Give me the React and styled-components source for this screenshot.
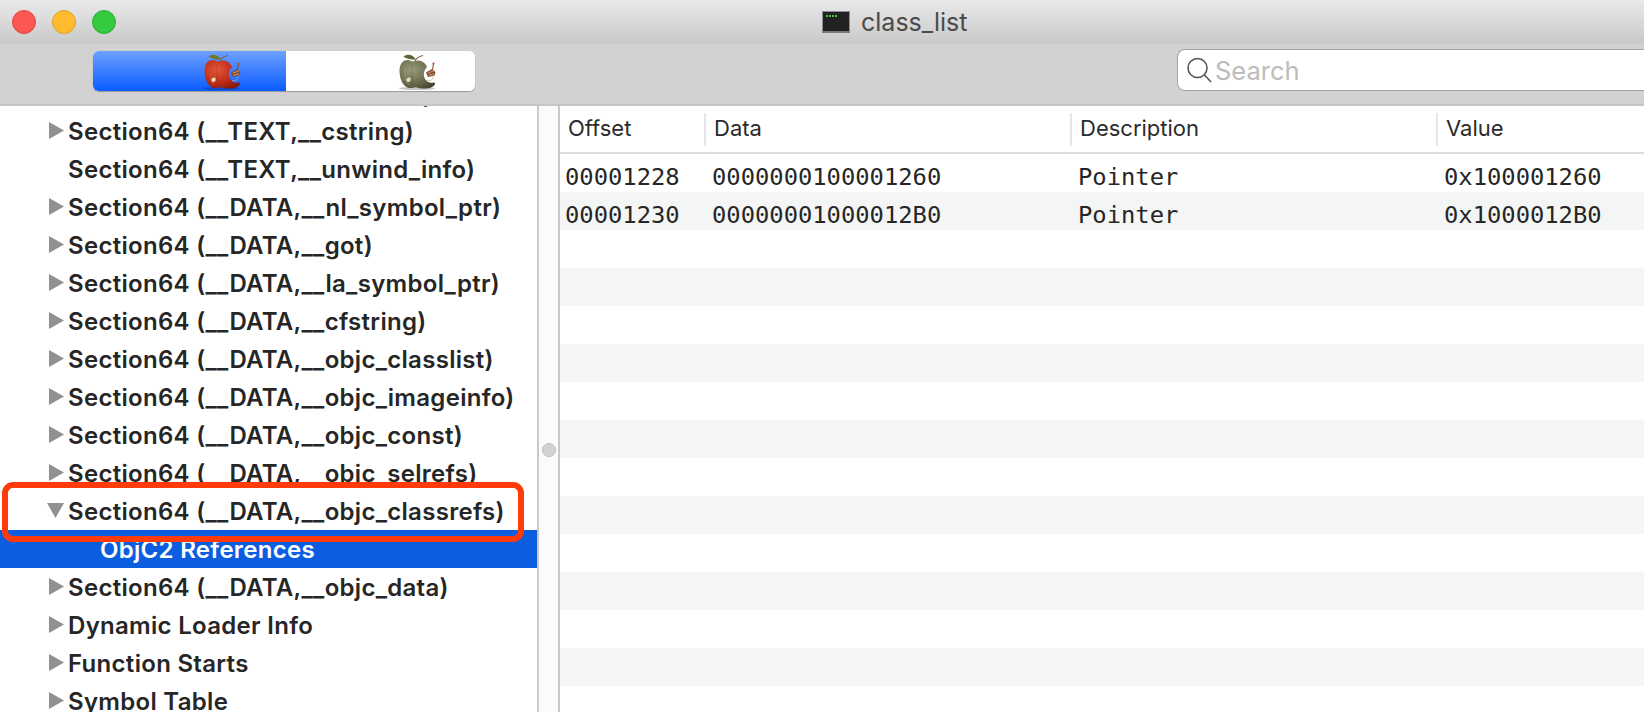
import React from 'react';
import styled, { createGlobalStyle } from 'styled-components';

const GlobalStyle = createGlobalStyle`
  html, body {
    margin: 0;
    padding: 0;
    background: #fff;
    overflow: hidden;
  }
`;

const Window = styled.div`
  position: relative;
  width: 1644px;
  height: 712px;
  overflow: hidden;
  display: flex;
  flex-direction: column;
  font-family: Inter, "Liberation Sans", sans-serif;
  color: #262626;
`;

const TitleBar = styled.div`
  position: relative;
  height: 44px;
  flex: none;
  display: flex;
  align-items: center;
  background: linear-gradient(#e9e9e9, #c9c9c9);
`;

const Lights = styled.div`
  display: flex;
  gap: 16px;
  padding-left: 12px;
`;

const Light = styled.span`
  width: 24px;
  height: 24px;
  box-sizing: border-box;
  border-radius: 50%;
  background: ${p => p.$fill};
  border: 1px solid ${p => p.$edge};
`;

const Title = styled.div`
  display: flex;
  align-items: center;
  gap: 11px;
  margin-left: 706px;
  font-size: 25px;
  color: #4b4b4b;
`;

const TermIcon = styled.span`
  width: 28px;
  height: 22px;
  box-sizing: border-box;
  background: #222;
  border: 1px solid #8b8f8f;
  border-bottom: 2px solid #777;
  display: flex;
  padding: 3px 3px;
  gap: 1px;
  i {
    width: 2px;
    height: 2px;
    background: #4fc04f;
  }
`;

const Toolbar = styled.div`
  height: 62px;
  flex: none;
  box-sizing: border-box;
  background: #d2d2d2;
  border-bottom: 2px solid #c6c6c6;
  display: flex;
  align-items: flex-start;
  padding: 7px 0 0 93px;
`;

const Segmented = styled.div`
  width: 382px;
  height: 40px;
  flex: none;
  display: flex;
  border-radius: 6px;
  overflow: hidden;
  background: #fff;
  box-shadow: 0 1px 1px #9a9a9a, 0 0 1px #a8a8a8;
`;

const Segment = styled.div`
  height: 40px;
  flex: none;
  width: ${p => p.$width}px;
  padding-left: ${p => p.$inset}px;
  box-sizing: border-box;
  background: ${p => (p.$active ? 'linear-gradient(#6ea1ff, #0a5bff)' : '#fff')};
`;

const SearchBox = styled.div`
  width: 480px;
  height: 42px;
  margin: -2px 0 0 702px;
  box-sizing: border-box;
  flex: none;
  display: flex;
  align-items: center;
  gap: 3px;
  padding-left: 8px;
  background: #fff;
  border: 1px solid #a3a3a3;
  border-right: 0;
  border-radius: 8px 0 0 8px;
  font-size: 25.5px;
  color: #bcbcbc;
`;

const Body = styled.div`
  flex: 1;
  min-height: 0;
  display: flex;
`;

const Sidebar = styled.div`
  width: 537px;
  flex: none;
  overflow: hidden;
  background: #fff;
`;

const TreeList = styled.div`
  margin-top: -32px;
`;

const TreeRow = styled.div`
  height: 38px;
  display: flex;
  align-items: center;
  padding-left: ${p => p.$indent}px;
  font-size: 24px;
  font-weight: 600;
  letter-spacing: 0.3px;
  white-space: nowrap;
  background: ${p => (p.$selected ? '#0b5ee0' : 'transparent')};
  color: ${p => (p.$selected ? '#fff' : '#262626')};
`;

const Disclosure = styled.svg`
  width: 21px;
  height: 18px;
  flex: none;
  fill: #919191;
`;

const Splitter = styled.div`
  width: 19px;
  flex: none;
  box-sizing: content-box;
  border-left: 2px solid #c9c9c9;
  border-right: 2px solid #c9c9c9;
  background: #fbfbfb;
  display: flex;
  justify-content: center;
  padding-top: 337px;
`;

const Grip = styled.span`
  width: 12px;
  height: 12px;
  border-radius: 50%;
  background: #d2d2d2;
  border: 1px solid #bdbdbd;
`;

const Table = styled.div`
  flex: 1;
  min-width: 0;
  overflow: hidden;
  background: #fff;
`;

const columns = '144px 366px 366px 1fr';

const HeaderRow = styled.div`
  display: grid;
  grid-template-columns: ${columns};
  height: 48px;
  box-sizing: border-box;
  border-bottom: 2px solid #dcdcdc;
  padding-top: 7px;
`;

const HeaderCell = styled.div`
  height: 33px;
  line-height: 31px;
  padding-left: 8px;
  font-size: 22px;
  color: #2b2b2b;
  border-left: ${p => (p.$first ? '0' : '2px solid #e6e6e6')};
`;

const DataRow = styled.div`
  display: grid;
  grid-template-columns: ${columns};
  height: 38px;
  line-height: 47px;
  align-items: center;
  background: ${p => (p.$striped ? '#f4f5f5' : '#fff')};
  font-family: "DejaVu Sans Mono", "Liberation Mono", monospace;
  font-size: 23.8px;
  color: #262626;
`;

const DataCell = styled.div`
  height: 38px;
  padding-left: ${p => (p.$first ? 5 : 8)}px;
  white-space: nowrap;
`;

const Annotation = styled.div`
  position: absolute;
  left: 2px;
  top: 482px;
  width: 522px;
  height: 60px;
  box-sizing: border-box;
  border: 6px solid #ff3b0c;
  border-radius: 11px;
  pointer-events: none;
`;

const palettes = {
  red: { light: '#e2583a', mid: '#bf2d18', dark: '#7f1608', leaf: '#6d7a2a' },
  olive: { light: '#9a9c7c', mid: '#6d6f50', dark: '#3f412c', leaf: '#5f6638' },
};

// hand drawn bitten apple with a little worm poking out
function Apple({ tone }) {
  const c = palettes[tone];
  const id = `apple-${tone}`;
  return (
    <svg width="50" height="40" viewBox="0 3 50 40">
      <defs>
        <radialGradient id={id} cx="0.35" cy="0.35" r="0.8">
          <stop offset="0" stopColor={c.light} />
          <stop offset="0.55" stopColor={c.mid} />
          <stop offset="1" stopColor={c.dark} />
        </radialGradient>
      </defs>
      <ellipse cx="27" cy="40.5" rx="18" ry="1.6" fill="#000" opacity="0.22" />
      <path
        d="M20 12.5 C14 10.5 9.5 15 9.5 23 C9.5 32 14 40 20 40 C23 40 24 39 26 39.2 C30 41 38 41 42 39 C45 37.5 46 35 44 34.5 C40 35.5 36 34 34.5 30 C33 26 34 22 37 19 C36 15 30 11 25.5 13 C23.5 14 22 13.2 20 12.5 Z"
        fill={`url(#${id})`}
      />
      <path d="M13.5 8.5 C17 5.5 23 6 26 11.5 C21 11.5 16 11 13.5 8.5 Z" fill={c.leaf} />
      <path d="M25 13.5 C26 10.5 28 8.5 33 7.5" fill="none" stroke="#7d6238" strokeWidth="1.2" />
      <path d="M15 20 C15.5 28 15 33 19 37" fill="none" stroke={c.light} strokeWidth="1.2" opacity="0.5" />
      <path d="M22 17 C21 24 22 30 24 37" fill="none" stroke={c.dark} strokeWidth="0.8" opacity="0.35" />
      <path d="M16.5 31 C17.5 29.5 19.5 29 20.5 30 C21 32.5 20 34 18.5 34 C17 34 16 33 16.5 31 Z" fill="#e6dcc0" />
      <path d="M36 24.5 L42 21 L45.5 24 L44.5 27.5 L38 29 Z" fill="#8a4a2c" />
      <path d="M38 25 L44 22.8 M38.5 27.2 L44 25.8" stroke="#d9c4a6" strokeWidth="0.7" />
      <path d="M42.5 21.5 L43.5 16" stroke="#8a4a2c" strokeWidth="1.1" />
      <circle cx="43.5" cy="15.5" r="1.1" fill="#a8552c" />
      <path d="M37 32.5 C40 33.5 43 32 43 28.5" fill="none" stroke="#c9a98a" strokeWidth="0.8" />
    </svg>
  );
}

function SearchIcon() {
  return (
    <svg width="26" height="30" viewBox="0 0 26 30" fill="none" stroke="#555" strokeWidth="1.6">
      <circle cx="11.5" cy="13" r="9.5" />
      <path d="M18.5 20 L25 27" />
    </svg>
  );
}

function Triangle({ open }) {
  return (
    <Disclosure viewBox="0 0 21 18">
      {open ? <polygon points="0,1 17,1 8.5,16" /> : <polygon points="2,0 17,8.5 2,17" />}
    </Disclosure>
  );
}

const tree = [
  { label: 'Section64 (__TEXT,__stub_helper)', arrow: true },
  { label: 'Section64 (__TEXT,__cstring)', arrow: true },
  { label: 'Section64 (__TEXT,__unwind_info)' },
  { label: 'Section64 (__DATA,__nl_symbol_ptr)', arrow: true },
  { label: 'Section64 (__DATA,__got)', arrow: true },
  { label: 'Section64 (__DATA,__la_symbol_ptr)', arrow: true },
  { label: 'Section64 (__DATA,__cfstring)', arrow: true },
  { label: 'Section64 (__DATA,__objc_classlist)', arrow: true },
  { label: 'Section64 (__DATA,__objc_imageinfo)', arrow: true },
  { label: 'Section64 (__DATA,__objc_const)', arrow: true },
  { label: 'Section64 (__DATA,__objc_selrefs)', arrow: true },
  { label: 'Section64 (__DATA,__objc_classrefs)', open: true },
  { label: 'ObjC2 References', child: true },
  { label: 'Section64 (__DATA,__objc_data)', arrow: true },
  { label: 'Dynamic Loader Info', arrow: true },
  { label: 'Function Starts', arrow: true },
  { label: 'Symbol Table', arrow: true },
];

const rows = [
  ['00001228', '0000000100001260', 'Pointer', '0x100001260'],
  ['00001230', '00000001000012B0', 'Pointer', '0x1000012B0'],
  ...Array.from({ length: 13 }, () => ['', '', '', '']),
];

export default function App() {
  return (
    <>
      <GlobalStyle />
      <Window>
        <TitleBar>
          <Lights>
            <Light $fill="#fd5754" $edge="#e0443e" />
            <Light $fill="#febb2e" $edge="#dea123" />
            <Light $fill="#34c93f" $edge="#2aac32" />
          </Lights>
          <Title>
            <TermIcon>
              <i /><i /><i /><i />
            </TermIcon>
            class_list
          </Title>
        </TitleBar>
        <Toolbar>
          <Segmented>
            <Segment $active $width={193} $inset={102}>
              <Apple tone="red" />
            </Segment>
            <Segment $width={189} $inset={104}>
              <Apple tone="olive" />
            </Segment>
          </Segmented>
          <SearchBox>
            <SearchIcon />
            Search
          </SearchBox>
        </Toolbar>
        <Body>
          <Sidebar>
            <TreeList>
              {tree.map(item => (
                <TreeRow key={item.label} $indent={item.child ? 100 : 47} $selected={item.child}>
                  {item.arrow || item.open ? <Triangle open={item.open} /> : null}
                  {!item.arrow && !item.open && !item.child ? <Disclosure as="span" /> : null}
                  {item.label}
                </TreeRow>
              ))}
            </TreeList>
          </Sidebar>
          <Splitter>
            <Grip />
          </Splitter>
          <Table>
            <HeaderRow>
              <HeaderCell $first>Offset</HeaderCell>
              <HeaderCell>Data</HeaderCell>
              <HeaderCell>Description</HeaderCell>
              <HeaderCell>Value</HeaderCell>
            </HeaderRow>
            {rows.map((row, i) => (
              <DataRow key={i} $striped={i % 2 === 1}>
                {row.map((cell, j) => (
                  <DataCell key={j} $first={j === 0}>{cell}</DataCell>
                ))}
              </DataRow>
            ))}
          </Table>
        </Body>
        <Annotation />
      </Window>
    </>
  );
}
